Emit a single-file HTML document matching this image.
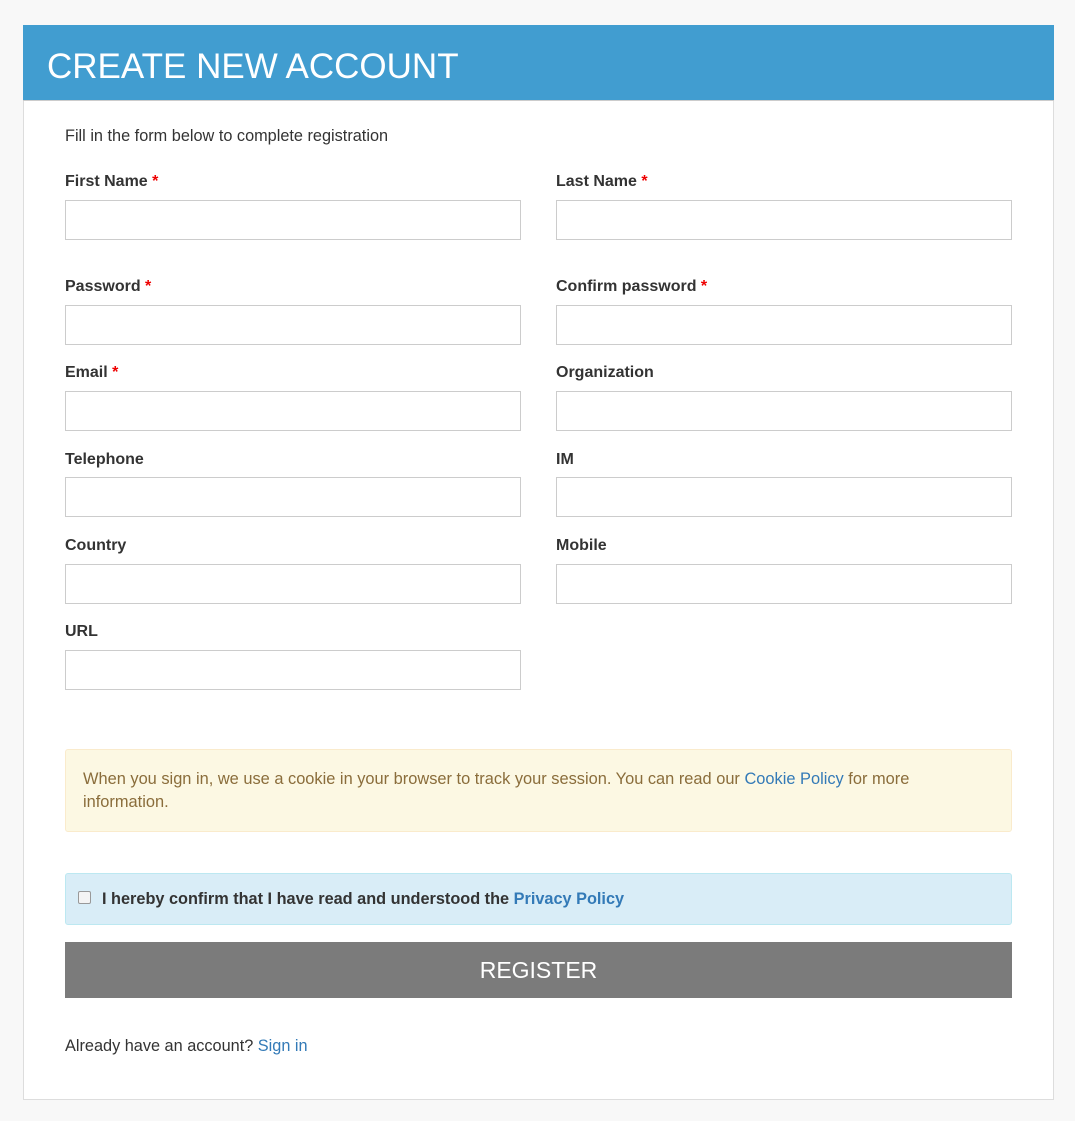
<!DOCTYPE html><html><head><style>
body{margin:0;background:#f8f8f8;font-family:"Liberation Sans",sans-serif;width:1075px;height:1121px;position:relative;color:#333}
.p{position:absolute;left:23px;top:25px;width:1029px;height:1073px;background:#fff;border:1px solid #ddd}
.h{position:absolute;left:23px;top:25px;width:1031px;height:75px;background:#419dd0;border-bottom:1px solid #ccc}
.h span{position:absolute;left:24px;top:21px;font-size:35px;color:#fff;line-height:42px}
.a{position:absolute;font-size:16.3px}
.l{position:absolute;font-size:16px;font-weight:bold;line-height:18px}
.l b{color:#e00}
.i{position:absolute;width:454px;height:38px;border:1px solid #ccc;background:#fff}
a{color:#337ab7;text-decoration:none}
</style></head><body>
<div class="p"></div>
<div class="h"><span>CREATE NEW ACCOUNT</span></div>
<div class="a" style="left:65px;top:127px">Fill in the form below to complete registration</div>
<div class="l" style="left:65px;top:173px">First Name <b>*</b></div><div class="i" style="left:65px;top:200px"></div>
<div class="l" style="left:556px;top:173px">Last Name <b>*</b></div><div class="i" style="left:556px;top:200px"></div>
<div class="l" style="left:65px;top:278px">Password <b>*</b></div><div class="i" style="left:65px;top:305px"></div>
<div class="l" style="left:556px;top:278px">Confirm password <b>*</b></div><div class="i" style="left:556px;top:305px"></div>
<div class="l" style="left:65px;top:364px">Email <b>*</b></div><div class="i" style="left:65px;top:391px"></div>
<div class="l" style="left:556px;top:364px">Organization</div><div class="i" style="left:556px;top:391px"></div>
<div class="l" style="left:65px;top:451px">Telephone</div><div class="i" style="left:65px;top:477px"></div>
<div class="l" style="left:556px;top:451px">IM</div><div class="i" style="left:556px;top:477px"></div>
<div class="l" style="left:65px;top:537px">Country</div><div class="i" style="left:65px;top:564px"></div>
<div class="l" style="left:556px;top:537px">Mobile</div><div class="i" style="left:556px;top:564px"></div>
<div class="l" style="left:65px;top:623px">URL</div><div class="i" style="left:65px;top:650px"></div>
<div style="position:absolute;left:65px;top:749px;width:945px;height:81px;background:#fcf8e3;border:1px solid #faebcc;border-radius:3px;color:#8a6d3b;font-size:16.4px;line-height:23px"><div style="padding:18px 17px">When you sign in, we use a cookie in your browser to track your session. You can read our <a href="#">Cookie Policy</a> for more<br>information.</div></div>
<div style="position:absolute;left:65px;top:873px;width:945px;height:50px;background:#d9edf7;border:1px solid #bce8f1;border-radius:3px"><div style="position:absolute;left:12px;top:17px;width:11px;height:11px;border:1px solid #999;border-radius:2px;background:#f4f4f4"></div><div style="position:absolute;left:36px;top:16px;font-size:16.3px;font-weight:bold">I hereby confirm that I have read and understood the <a href="#">Privacy Policy</a></div></div>
<div style="position:absolute;left:65px;top:942px;width:947px;height:56px;background:#7b7b7b;color:#fff;font-size:23px;text-align:center;line-height:56px">REGISTER</div>
<div class="a" style="left:65px;top:1037px">Already have an account? <a href="#">Sign in</a></div>
</body></html>
